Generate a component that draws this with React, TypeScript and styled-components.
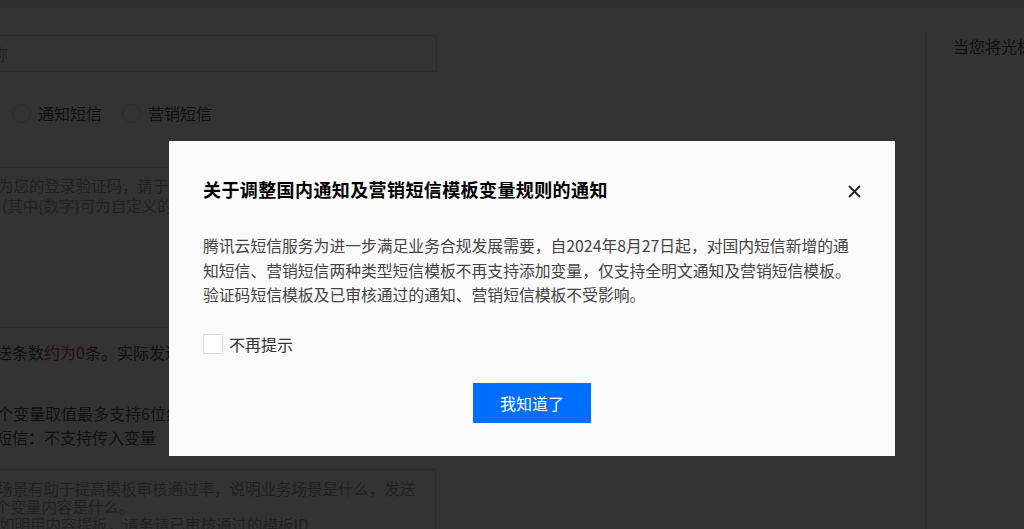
import styled, { createGlobalStyle } from "styled-components";

const GlobalStyle = createGlobalStyle`
  html, body {
    margin: 0;
    padding: 0;
    overflow: hidden;
    background: #fff;
  }
  body {
    font-family: "Noto Sans CJK SC", "Noto Sans", "Liberation Sans", sans-serif;
  }
`;

export default function App() {
  return (
    <>
      <GlobalStyle />
      <PageStyled>
        <TopStrip />
        <Main>
          <FormColumn>
            <InputBox>
              <Placeholder>称</Placeholder>
            </InputBox>

            <RadioRow>
              <RadioItem>
                <RadioCircle />
                <span>通知短信</span>
              </RadioItem>
              <RadioItem>
                <RadioCircle />
                <span>营销短信</span>
              </RadioItem>
            </RadioRow>

            <TextareaBox>
              <FaintLine shift={-3}>为您的登录验证码，请于2分钟内填写，如非本人操作</FaintLine>
              <FaintLine shift={1}>(其中{"{数字}"}可为自定义的内容，须从1开始连续编号</FaintLine>
            </TextareaBox>

            <CountLine>
              送条数<Red>约为0</Red>条。实际发送条数以运营商计费为准
            </CountLine>

            <VarLines>
              <DarkLine shift={-3}>个变量取值最多支持6位纯数字</DarkLine>
              <DarkLine shift={-4}>短信：不支持传入变量</DarkLine>
            </VarLines>

            <SceneBox>
              <SceneLine shift={-4}>场景有助于提高模板审核通过率，说明业务场景是什么，发送</SceneLine>
              <SceneLine shift={-6}>个变量内容是什么。</SceneLine>
              <SceneLine shift={-2}>如明用内容提板，请务请已审核通过的模板ID</SceneLine>
            </SceneBox>
          </FormColumn>

          <SidePanel>
            <SideText>当您将光标移至输入框时，这里将展示填写说明</SideText>
          </SidePanel>
        </Main>
      </PageStyled>

      <Mask>
        <Dialog>
          <DialogHeader>
            <DialogTitle>关于调整国内通知及营销短信模板变量规则的通知</DialogTitle>
            <CloseButton aria-label="关闭">
              <svg width="13" height="13" viewBox="0 0 13 13">
                <path d="M1 1 L12 12 M12 1 L1 12" stroke="#222" strokeWidth="1.8" fill="none" />
              </svg>
            </CloseButton>
          </DialogHeader>

          <DialogBody>
            腾讯云短信服务为进一步满足业务合规发展需要，自2024年8月27日起，对国内短信新增的通
            <br />
            知短信、营销短信两种类型短信模板不再支持添加变量，仅支持全明文通知及营销短信模板。
            <br />
            验证码短信模板及已审核通过的通知、营销短信模板不受影响。
          </DialogBody>

          <CheckRow>
            <CheckBox />
            <span>不再提示</span>
          </CheckRow>

          <DialogFooter>
            <PrimaryButton>我知道了</PrimaryButton>
          </DialogFooter>
        </Dialog>
      </Mask>
    </>
  );
}

const PageStyled = styled.div`
  width: 100%;
  height: 100vh;
  overflow: hidden;
  background: #fff;
  color: #000;
  display: flex;
  flex-direction: column;
`;

const TopStrip = styled.div`
  height: 8px;
  flex-shrink: 0;
  background: #eef0f3;
`;

const Main = styled.div`
  flex: 1;
  min-height: 0;
  display: flex;
  overflow: hidden;
`;

const FormColumn = styled.div`
  width: 925px;
  flex-shrink: 0;
  display: flex;
  flex-direction: column;
  overflow: hidden;
`;

const InputBox = styled.div`
  margin: 27px 0 0 -20px;
  width: 457px;
  height: 37px;
  flex-shrink: 0;
  box-sizing: border-box;
  border: 1px solid #d9d9d9;
  display: flex;
  align-items: center;
  padding-left: 12px;
`;

const Placeholder = styled.span`
  font-size: 15px;
  color: #b0b0b0;
`;

const RadioRow = styled.div`
  margin-top: 31px;
  margin-left: 12px;
  display: flex;
  gap: 20px;
`;

const RadioItem = styled.label`
  display: flex;
  align-items: center;
  gap: 7px;
  font-size: 16px;
  line-height: 20px;
  color: #555;
`;

const RadioCircle = styled.span`
  width: 19px;
  height: 19px;
  box-sizing: border-box;
  border: 1px solid #d9d9d9;
  border-radius: 50%;
  background: #fff;
`;

const TextareaBox = styled.div`
  margin: 44px 0 0 -20px;
  width: 457px;
  height: 161px;
  flex-shrink: 0;
  box-sizing: border-box;
  border: 1px solid #d9d9d9;
  padding: 7px 0 0 20px;
  overflow: hidden;
`;

const FaintLine = styled.div<{ shift: number }>`
  margin-left: ${(p) => p.shift}px;
  font-size: 15.5px;
  line-height: 20px;
  color: #a8a8a8;
  white-space: nowrap;
`;

const CountLine = styled.div`
  margin: 14px 0 0 -4px;
  font-size: 16px;
  line-height: 20px;
  color: #555;
  white-space: nowrap;
`;

const Red = styled.span`
  color: #e54545;
`;

const VarLines = styled.div`
  margin-top: 39px;
`;

const DarkLine = styled.div<{ shift: number }>`
  margin-left: ${(p) => p.shift}px;
  font-size: 16px;
  line-height: 24px;
  color: #555;
  white-space: nowrap;
`;

const SceneBox = styled.div`
  margin: 20px 0 0 -20px;
  width: 456px;
  flex: 1;
  min-height: 0;
  box-sizing: border-box;
  border: 1px solid #d9d9d9;
  border-bottom: none;
  padding: 9px 0 0 20px;
  overflow: hidden;
`;

const SceneLine = styled.div<{ shift: number }>`
  margin-left: ${(p) => p.shift}px;
  font-size: 15.5px;
  line-height: 18px;
  color: #a8a8a8;
  white-space: nowrap;
`;

const SidePanel = styled.div`
  flex: 1;
  margin-top: 24px;
  border-left: 1px solid #e3e3e3;
  padding: 3px 0 0 27px;
  overflow: hidden;
`;

const SideText = styled.div`
  font-size: 16px;
  line-height: 22px;
  color: #555;
  white-space: nowrap;
`;

const Mask = styled.div`
  position: fixed;
  inset: 0;
  background: rgba(0, 0, 0, 0.8);
  display: flex;
  align-items: flex-start;
  padding: 141px 0 0 169px;
`;

const Dialog = styled.div`
  width: 726px;
  background: #fafafa;
  box-sizing: border-box;
  padding: 36px 34px 33px;
`;

const DialogHeader = styled.div`
  display: flex;
  align-items: center;
  justify-content: space-between;
`;

const DialogTitle = styled.h3`
  margin: 0;
  font-size: 18px;
  font-weight: 700;
  line-height: 24px;
  color: #000;
  letter-spacing: 0.4px;
`;

const CloseButton = styled.button`
  border: none;
  background: none;
  padding: 0;
  width: 13px;
  height: 13px;
  margin-top: 4px;
  display: flex;
  cursor: pointer;
`;

const DialogBody = styled.p`
  margin: 33px 0 0;
  font-size: 15.8px;
  line-height: 24.5px;
  color: #444;
  white-space: nowrap;
`;

const CheckRow = styled.label`
  margin-top: 26px;
  display: flex;
  align-items: center;
  gap: 6px;
  font-size: 16px;
  line-height: 20px;
  color: #333;
`;

const CheckBox = styled.span`
  width: 20px;
  height: 20px;
  box-sizing: border-box;
  border: 1px solid #dcdcdc;
  background: #fff;
`;

const DialogFooter = styled.div`
  display: flex;
  justify-content: center;
  margin-top: 29px;
`;

const PrimaryButton = styled.button`
  width: 118px;
  height: 40px;
  border: none;
  background: #006eff;
  color: #fff;
  font-family: inherit;
  font-size: 16px;
  cursor: pointer;
`;
